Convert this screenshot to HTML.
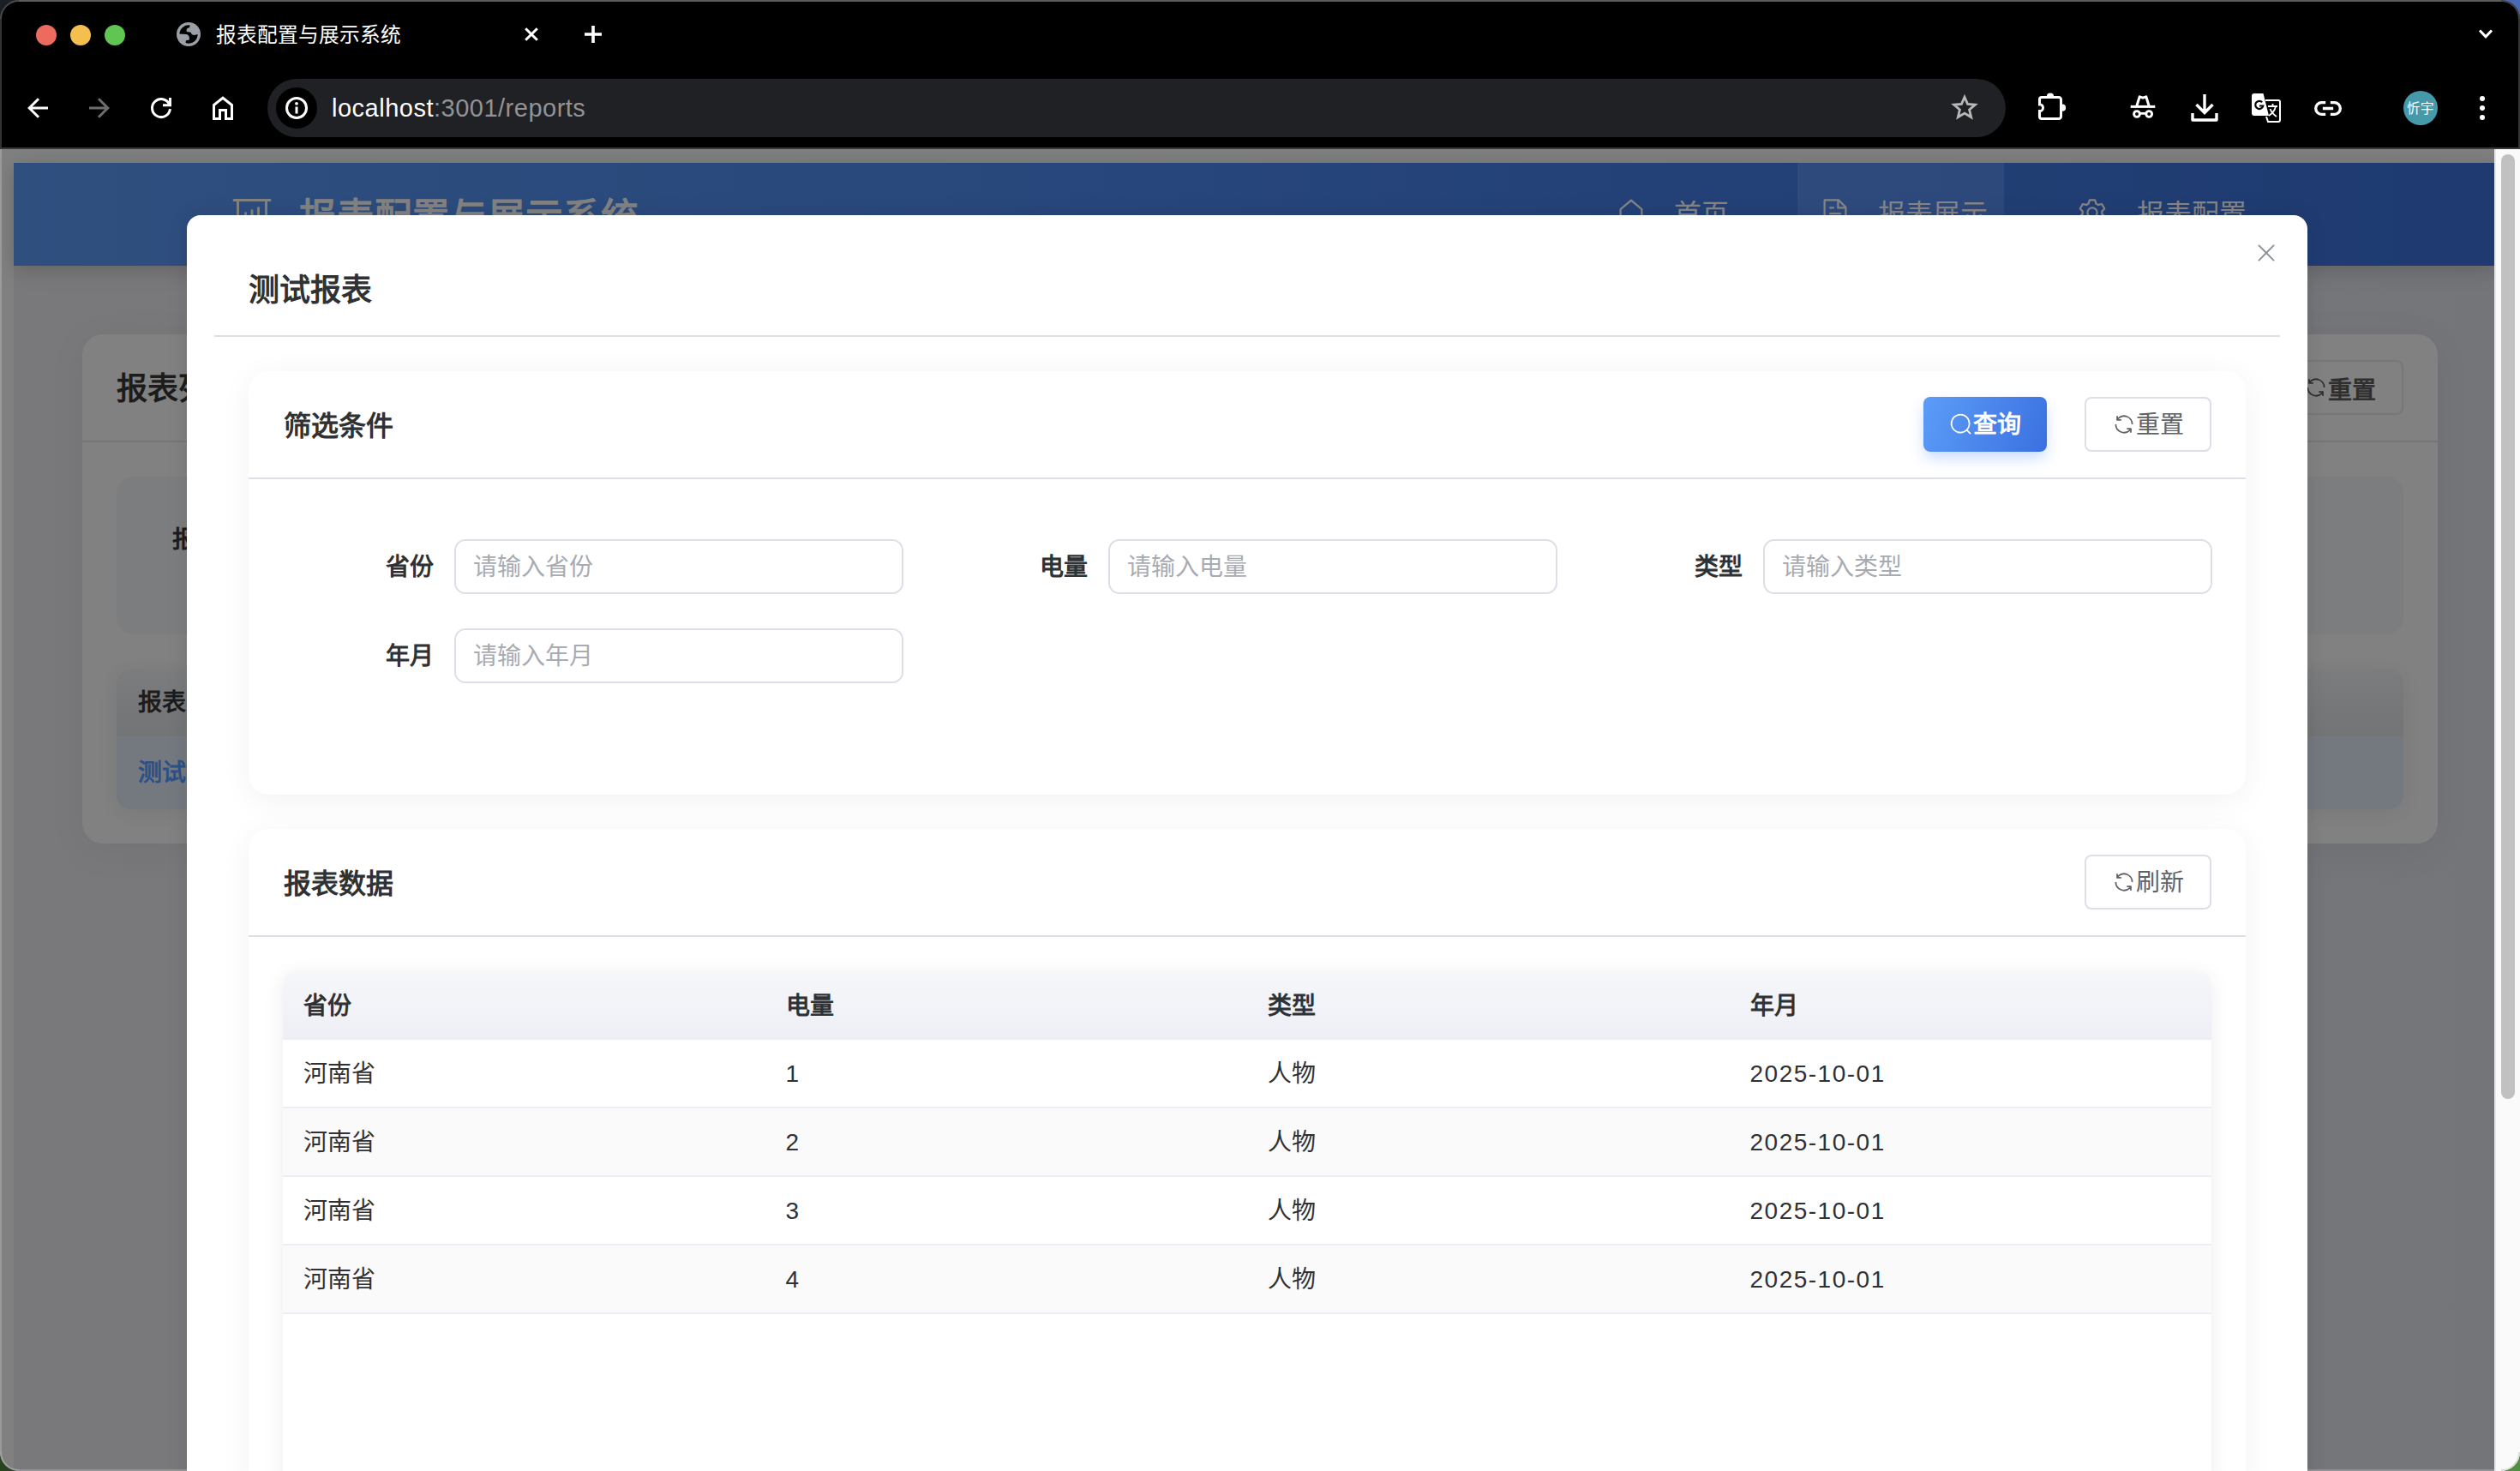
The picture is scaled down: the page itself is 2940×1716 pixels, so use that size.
<!DOCTYPE html>
<html lang="zh-CN">
<head>
<meta charset="utf-8">
<title>报表配置与展示系统</title>
<style>
*{box-sizing:border-box;margin:0;padding:0}
html,body{width:2940px;height:1716px;overflow:hidden;background:#000}
body{position:relative;font-family:"Liberation Sans",sans-serif;color:#303133}
.abs{position:absolute}
svg{display:block;overflow:visible}
/* ---------- browser chrome ---------- */
#chrome{position:absolute;left:0;top:0;width:2940px;height:174px;background:#000;z-index:50}
#chrome .topline{position:absolute;left:0;top:0;width:2940px;height:2px;background:#5c5c5c}
#chrome .botline{position:absolute;left:0;top:172px;width:2940px;height:2px;background:#383838}
#chrome .lb{position:absolute;left:0;top:0;width:2px;height:174px;background:#333}
#chrome .rb{position:absolute;right:0;top:0;width:2px;height:174px;background:#333}
.tl{position:absolute;top:29px;width:24px;height:24px;border-radius:50%}
#tabtitle{position:absolute;left:252px;top:21px;height:40px;line-height:40px;font-size:23.700px;color:#fff;white-space:nowrap}
#omni{position:absolute;left:312px;top:92px;width:2028px;height:68px;border-radius:34px;background:#202124}
#omni .info{position:absolute;left:10px;top:10px;width:48px;height:48px;border-radius:50%;background:#000}
#url{position:absolute;left:75px;top:0;height:68px;line-height:68px;font-size:29px;color:#fff;white-space:nowrap;letter-spacing:.5px}
#url span{color:#929395}
#avatar{position:absolute;left:2804px;top:106px;width:40px;height:40px;border-radius:50%;background:#4699a8;color:#fff;font-size:15.500px;line-height:42px;text-align:center;white-space:nowrap}
/* corners of the window */
.corner{position:absolute;width:22px;height:22px;z-index:60;pointer-events:none}
/* ---------- page ---------- */
#page{position:absolute;left:0;top:174px;width:2910px;height:1542px;background:#808080;overflow:hidden}
#page .lb{position:absolute;left:0;top:0;width:2px;height:1542px;background:#9a9a9a;z-index:5}
#app{position:absolute;left:16px;top:16px;width:2900px;height:1600px;background:linear-gradient(90deg,#79797b 0%,#747579 100%)}
#hdr{position:absolute;left:0;top:0;width:2900px;height:120px;background:linear-gradient(90deg,#2f4f7f 0%,#27467b 45%,#1e3a70 100%);box-shadow:0 4px 24px rgba(0,0,0,.18)}
#hdr .title{position:absolute;left:333px;top:41px;height:44px;line-height:44px;font-size:43.600px;font-weight:700;color:#828282;white-space:nowrap}
.nav{position:absolute;top:0;height:120px}
.nav .t{position:absolute;top:42px;height:36px;line-height:36px;font-size:32px;font-weight:500;color:#858585;white-space:nowrap}
#scroll{position:absolute;left:2910px;top:174px;width:30px;height:1542px;background:#fafafa;border-left:2px solid #e8e8e8}
#scroll .thumb{position:absolute;left:6px;top:6px;width:16px;height:1102px;border-radius:8px;background:#c1c1c1}
/* background card (dimmed) */
#bgcard{position:absolute;left:80px;top:200px;width:2748px;height:594px;border-radius:24px;background:#818181;box-shadow:0 8px 48px rgba(0,0,0,.05)}

/* bg card content */
#bgcard .h{position:absolute;left:40px;top:40px;height:48px;line-height:48px;font-size:36px;font-weight:700;color:#1c1c1c;white-space:nowrap}
#bgcard .hl{position:absolute;left:0;top:124px;width:2748px;height:2px;background:#75767b}
#bgcard .btn{position:absolute;left:2560px;top:30px;width:148px;height:64px;border:2px solid #76777d;border-radius:8px;color:#2f2f30;font-size:28px;font-weight:700;line-height:60px;white-space:nowrap}
#bgcard .btn svg{position:absolute;left:30px;top:16px}
#bgcard .btn span{position:absolute;left:58px;top:1px}
#bgcard .fbox{position:absolute;left:40px;top:166px;width:2668px;height:184px;border-radius:20px;background:#7c7d7f}
#bgcard .fbox .l{position:absolute;left:65px;top:54px;height:40px;line-height:40px;font-size:28px;font-weight:700;color:#1c1c1c}
#bgcard .tbl{position:absolute;left:40px;top:391px;width:2668px;height:163px;border-radius:16px;overflow:hidden;box-shadow:0 4px 24px rgba(0,0,0,.06)}
#bgcard .tbl .th{position:absolute;left:0;top:0;width:100%;height:78px;background:linear-gradient(180deg,#7b7c7e,#737476)}
#bgcard .tbl .tr{position:absolute;left:0;top:78px;width:100%;height:85px;background:#747980}
#bgcard .tbl .a{position:absolute;left:25px;height:40px;line-height:40px;font-size:28px;font-weight:700;white-space:nowrap}
/* ---------- modal ---------- */
#modal{position:absolute;left:218px;top:251px;width:2474px;height:1600px;background:#fff;border-radius:16px;z-index:20;box-shadow:0 0 24px rgba(0,0,0,.10)}
#modal .mtitle{position:absolute;left:72px;top:64px;height:48px;line-height:48px;font-size:36px;font-weight:700;color:#303133;white-space:nowrap}
#modal .mclose{position:absolute;left:2410px;top:28px;color:#909399}
#modal .mline{position:absolute;left:32px;top:140px;width:2410px;height:2px;background:#dcdfe6}
.card{position:absolute;left:72px;width:2330px;background:#fff;border-radius:24px;box-shadow:0 6px 36px rgba(0,0,0,.055)}
.card .ct{position:absolute;left:41px;top:42px;height:44px;line-height:44px;font-size:32px;font-weight:700;color:#303133;white-space:nowrap}
.card .cl{position:absolute;left:0;top:124px;width:2330px;height:2px;background:#dddfe7}
.btn{position:absolute;height:64px;border-radius:8px;font-size:28px;white-space:nowrap}
.btn svg{position:absolute;top:18px}
.btn span{position:absolute;top:0;height:64px;line-height:65px}
.btn.pri{background:linear-gradient(112deg,#5c9df8 0%,#3a70e0 100%);color:#fff;font-weight:700;box-shadow:0 8px 18px -2px rgba(64,128,255,.32)}
.btn.def{background:#fff;border:2px solid #dcdfe6;color:#606266;font-weight:500}
.btn.def svg{top:16px}
.btn.def span{height:60px;line-height:62px}
.fl{position:absolute;width:176px;height:64px;line-height:66px;text-align:right;font-size:28px;font-weight:700;color:#303133;white-space:nowrap}
.fi{position:absolute;width:524px;height:64px;border:2px solid #dcdfe6;border-radius:13px;background:#fff;padding-left:20px;line-height:62px;font-size:28px;color:#a8abb2;white-space:nowrap}
#tbl{position:absolute;left:40px;top:166px;width:2250px;height:700px;border-radius:16px;overflow:hidden;box-shadow:0 4px 24px rgba(0,0,0,.08);background:#fff}
#tbl .th{position:absolute;left:0;top:0;width:2250px;height:80px;background:linear-gradient(180deg,#f5f7fa 0%,#edeff5 100%)}
#tbl .tr{position:absolute;left:0;width:2250px;height:80px;border-bottom:2px solid #ebeef5;background:#fff}
#tbl .tr.s{background:#fafafa}
#tbl .c{position:absolute;top:0;height:78px;line-height:80px;font-size:28px;color:#303133;white-space:nowrap}
#tbl .th .c{font-weight:700;height:80px;line-height:81px}

.corner.tl{left:0;top:0}
.corner.tr{right:0;top:0;transform:scaleX(-1)}
.corner.bl{left:0;bottom:0;transform:scaleY(-1)}
.corner.br{right:0;bottom:0;transform:scale(-1,-1)}
#botline{position:absolute;left:0;top:1714px;width:2910px;height:2px;background:rgba(255,255,255,.2);z-index:55}
</style>
</head>
<body>
<div id="chrome">
  <div class="topline"></div><div class="lb"></div><div class="rb"></div><div class="botline"></div>
  <div class="tl" style="left:42px;background:#ec6a5e"></div>
  <div class="tl" style="left:82px;background:#f4bf4f"></div>
  <div class="tl" style="left:122px;background:#61c554"></div>
  <!-- globe favicon -->
  <svg class="abs" style="left:206px;top:26px" width="28" height="28" viewBox="0 0 28 28">
    <circle cx="14" cy="14" r="14" fill="#9aa0a6"/>
    <path fill="#000" d="M15.800 3.400A10.700 10.700 0 0 0 3.400 13.600L11.500 13.900C13.500 14.200 14.900 16 14.900 18.500L14.800 20.400L10.900 21.200L10.600 24.100A10.700 10.700 0 0 0 24.700 14.100L20.700 14.900C19 14.900 17.800 14.300 17.400 13.600L16.600 11.700L11.700 11.100V8.100L13 6.800L14.900 6.200Z"/>
  </svg>
  <div id="tabtitle">报表配置与展示系统</div>
  <!-- tab close -->
  <svg class="abs" style="left:612px;top:32px" width="16" height="16" viewBox="0 0 16 16"><path d="M1.200 1.200L14.800 14.800M14.800 1.200L1.200 14.800" stroke="#fff" stroke-width="3" fill="none"/></svg>
  <!-- new tab -->
  <svg class="abs" style="left:682px;top:30px" width="20" height="20" viewBox="0 0 20 20"><path d="M10 0V20M0 10H20" stroke="#fff" stroke-width="3.600" fill="none"/></svg>
  <!-- chevron -->
  <svg class="abs" style="left:2892px;top:34px" width="16" height="12" viewBox="0 0 16 12"><path d="M1 1.500L8 8.800L15 1.500" stroke="#fff" stroke-width="3" fill="none"/></svg>
  <!-- back -->
  <svg class="abs" style="left:32px;top:114px" width="24" height="24" viewBox="0 0 24 24"><path d="M24 12H3.500M13 1.200L2.200 12L13 22.800" stroke="#fff" stroke-width="3" fill="none"/></svg>
  <!-- forward -->
  <svg class="abs" style="left:104px;top:114px" width="24" height="24" viewBox="0 0 24 24"><path d="M0 12H20.500M11 1.200L21.800 12L11 22.800" stroke="#6e6e6e" stroke-width="3" fill="none"/></svg>
  <!-- reload -->
  <svg class="abs" style="left:176px;top:114px" width="24" height="24" viewBox="0 0 24 24"><path d="M21.6 7.800A10.500 10.500 0 1 0 22.440 13.100" stroke="#fff" stroke-width="3" fill="none"/><path d="M22.500 0V8.800H14" stroke="#fff" stroke-width="3" fill="none"/></svg>
  <!-- home -->
  <svg class="abs" style="left:248px;top:112px" width="24" height="28" viewBox="0 0 24 28"><path d="M1.500 26.500V10.500L12 2.200L22.500 10.500V26.500H15.500V16.500H8.500V26.500Z" stroke="#fff" stroke-width="3" fill="none"/></svg>
  <div id="omni">
    <div class="info"></div>
    <svg class="abs" style="left:21px;top:21px" width="26" height="26" viewBox="0 0 26 26"><circle cx="13" cy="13" r="11.500" stroke="#fff" stroke-width="3" fill="none"/><rect x="11.500" y="11.500" width="3" height="8" fill="#fff"/><circle cx="13" cy="7.800" r="1.900" fill="#fff"/></svg>
    <div id="url">localhost<span>:3001/reports</span></div>
    <!-- star -->
    <svg class="abs" style="left:1965px;top:18px" width="30" height="30" viewBox="0 0 32 32"><path d="M16 3.500L19.800 12.200L29.200 13L22 19.200L24.200 28.500L16 23.500L7.800 28.500L10 19.200L2.800 13L12.200 12.200Z" stroke="#b8b8b8" stroke-width="3" fill="none" stroke-linejoin="miter"/></svg>
  </div>
  <!-- puzzle -->
  <svg class="abs" style="left:2376px;top:106px" width="36" height="36" viewBox="0 0 36 36"><path d="M3.500 15.700V10a2.500 2.500 0 0 1 2.500-2.500H26a2.500 2.500 0 0 1 2.500 2.500V30a2.500 2.500 0 0 1-2.500 2.500H6a2.500 2.500 0 0 1-2.500-2.500V23.700A4 4 0 0 0 3.500 15.700Z" stroke="#fff" stroke-width="3" fill="none"/><path d="M2 15.700H4M2 23.700H4" stroke="#fff" stroke-width="3"/><path d="M11.900 6.500A4.100 4.100 0 0 1 20.100 6.500V8H11.900Z" fill="#fff"/><path d="M30 15.600A4.100 4.100 0 0 1 30 23.800H28.500V15.600Z" fill="#fff"/></svg>
  <!-- incognito-like extension -->
  <svg class="abs" style="left:2485px;top:110px" width="30" height="30" viewBox="0 0 30 30"><path d="M0.700 14.400H29.300" stroke="#fff" stroke-width="3"/><path d="M7.900 13.500L11.200 2.800L15 4.200L18.800 2.800L22.100 13.500" stroke="#fff" stroke-width="3" fill="none" stroke-linejoin="round"/><circle cx="8" cy="23" r="3.400" stroke="#fff" stroke-width="2.900" fill="none"/><circle cx="22.200" cy="23" r="3.400" stroke="#fff" stroke-width="2.900" fill="none"/><path d="M11.300 22.300H18.900" stroke="#fff" stroke-width="2.800"/></svg>
  <!-- download -->
  <svg class="abs" style="left:2556px;top:110px" width="32" height="32" viewBox="0 0 32 32"><path d="M16 0V21M6.500 12L16 21.500L25.500 12" stroke="#fff" stroke-width="3.400" fill="none"/><path d="M2 22V30H30V22" stroke="#fff" stroke-width="3.400" fill="none" stroke-linejoin="round"/></svg>
  <!-- translate -->
  <svg class="abs" style="left:2627px;top:109px" width="34" height="34" viewBox="0 0 34 34"><path d="M3 0H13.500L20 26H3A3 3 0 0 1 0 23V3A3 3 0 0 1 3 0Z" fill="#fff"/><path d="M16 8H31A2 2 0 0 1 33 10V31A2 2 0 0 1 31 33H19L17 27" stroke="#fff" stroke-width="2" fill="none"/><path d="M19 15H30M24.500 12V15M28 15C27 20 23 24 20 26M21.500 18C23 22 26 25 29 27" stroke="#fff" stroke-width="1.800" fill="none"/><path d="M12.200 10.300A4.600 4.600 0 1 0 13.300 14.500H9" stroke="#000" stroke-width="2.200" fill="none"/></svg>
  <!-- link -->
  <svg class="abs" style="left:2700px;top:117.500px" width="32" height="17" viewBox="0 0 34 18"><path d="M14 1.800H9A7.200 7.200 0 0 0 9 16.200H14M20 1.800H25A7.200 7.200 0 0 1 25 16.200H20M10.500 9H23.500" stroke="#fff" stroke-width="3.500" fill="none"/></svg>
  <div id="avatar">忻宇</div>
  <!-- menu dots -->
  <svg class="abs" style="left:2892px;top:111px" width="8" height="30" viewBox="0 0 8 30"><circle cx="4" cy="4" r="3" fill="#fff"/><circle cx="4" cy="15" r="3" fill="#fff"/><circle cx="4" cy="26" r="3" fill="#fff"/></svg>
</div>

<div id="page">
  <div class="lb"></div>
  <div id="app">
    <div id="hdr">
      <svg class="abs" style="left:254px;top:36px;color:#828282" width="48" height="48" viewBox="0 0 1024 1024"><path fill="currentColor" d="m665.216 768 110.848 192h-73.856L591.360 768H433.024L322.176 960H248.320l110.848-192H160a32 32 0 0 1-32-32V192H64a32 32 0 0 1 0-64h896a32 32 0 1 1 0 64h-64v544a32 32 0 0 1-32 32zM832 192H192v512h640zM352 448a32 32 0 0 1 32 32v64a32 32 0 0 1-64 0v-64a32 32 0 0 1 32-32m160-64a32 32 0 0 1 32 32v128a32 32 0 0 1-64 0V416a32 32 0 0 1 32-32m160-64a32 32 0 0 1 32 32v192a32 32 0 1 1-64 0V352a32 32 0 0 1 32-32"/></svg>
      <div class="title">报表配置与展示系统</div>
      <div class="nav" style="left:1841px;width:240px">
        <svg class="abs" style="left:28px;top:40px;color:#858585" width="36" height="36" viewBox="0 0 1024 1024"><path fill="currentColor" d="M192 413.952V896h640V413.952L512 147.328zM139.520 374.400l352-293.312a32 32 0 0 1 40.960 0l352 293.312A32 32 0 0 1 896 398.976V928a32 32 0 0 1-32 32H160a32 32 0 0 1-32-32V398.976a32 32 0 0 1 11.520-24.576"/></svg>
        <div class="t" style="left:96px">首页</div>
      </div>
      <div class="nav" style="left:2081px;width:241px;background:rgba(255,255,255,.055)">
        <svg class="abs" style="left:26px;top:40px;color:#858585" width="36" height="36" viewBox="0 0 1024 1024"><path fill="currentColor" d="M832 384H576V128H192v768h640zm-26.496-64L640 154.496V320zM160 64h480l256 256v608a32 32 0 0 1-32 32H160a32 32 0 0 1-32-32V96a32 32 0 0 1 32-32m160 448h384v64H320zm0-192h160v64H320zm0 384h384v64H320z"/></svg>
        <div class="t" style="left:94px">报表展示</div>
      </div>
      <div class="nav" style="left:2322px;width:330px">
        <svg class="abs" style="left:85px;top:40px;color:#858585" width="36" height="36" viewBox="0 0 1024 1024"><path fill="currentColor" d="M600.704 64a32 32 0 0 1 30.464 22.208l35.200 109.376c14.784 7.232 28.928 15.360 42.432 24.512l112.384-24.192a32 32 0 0 1 34.432 15.360L944.320 364.800a32 32 0 0 1-4.032 37.504l-77.120 85.120a357.120 357.120 0 0 1 0 49.024l77.120 85.248a32 32 0 0 1 4.032 37.504l-88.704 153.600a32 32 0 0 1-34.432 15.296L708.800 803.904c-13.440 9.088-27.648 17.280-42.368 24.512l-35.264 109.376A32 32 0 0 1 600.704 960H423.296a32 32 0 0 1-30.464-22.208L357.696 828.480a351.616 351.616 0 0 1-42.560-24.640l-112.320 24.256a32 32 0 0 1-34.432-15.360L79.680 659.200a32 32 0 0 1 4.032-37.504l77.120-85.248a357.120 357.120 0 0 1 0-48.896l-77.120-85.248A32 32 0 0 1 79.680 364.800l88.704-153.600a32 32 0 0 1 34.432-15.296l112.320 24.256c13.568-9.152 27.776-17.408 42.560-24.640l35.200-109.312A32 32 0 0 1 423.232 64H600.640zm-23.424 64H446.720l-36.352 113.088-24.512 11.968a294.113 294.113 0 0 0-34.816 20.096l-22.656 15.360-116.224-25.088-65.280 113.152 79.680 88.192-1.920 27.136a293.120 293.120 0 0 0 0 40.192l1.920 27.136-79.808 88.192 65.344 113.152 116.224-25.024 22.656 15.296a294.113 294.113 0 0 0 34.816 20.096l24.512 11.968L446.720 896h130.688l36.480-113.152 24.448-11.904a288.282 288.282 0 0 0 34.752-20.096l22.592-15.296 116.288 25.024 65.280-113.152-79.744-88.192 1.920-27.136a293.120 293.120 0 0 0 0-40.256l-1.920-27.136 79.808-88.128-65.344-113.152-116.288 24.960-22.592-15.232a287.616 287.616 0 0 0-34.752-20.096l-24.448-11.904L577.344 128zM512 320a192 192 0 1 1 0 384 192 192 0 0 1 0-384m0 64a128 128 0 1 0 0 256 128 128 0 0 0 0-256"/></svg>
        <div class="t" style="left:155px">报表配置</div>
      </div>
    </div>
    <div id="bgcard">
      <div class="h">报表列表</div>
      <div class="btn"><svg width="28" height="28" viewBox="0 0 1024 1024"><path fill="currentColor" d="M771.776 794.88A384 384 0 0 1 128 512h64a320 320 0 0 0 555.712 216.448H654.72a32 32 0 1 1 0-64h149.056a32 32 0 0 1 32 32v148.928a32 32 0 1 1-64 0v-50.56zM276.288 295.616h92.992a32 32 0 0 1 0 64H220.16a32 32 0 0 1-32-32V178.56a32 32 0 0 1 64 0v50.56A384 384 0 0 1 896.128 512h-64a320 320 0 0 0-555.776-216.384z"/></svg><span>重置</span></div>
      <div class="hl"></div>
      <div class="fbox"><div class="l">报表名称</div></div>
      <div class="tbl"><div class="th"><div class="a" style="top:19px;color:#1c1c1c">报表名称</div></div><div class="tr"><div class="a" style="top:23px;color:#2d5187">测试报表</div></div></div>
    </div>
  </div>
</div>
<div id="scroll"><div class="thumb"></div></div>
<div id="modal">
  <div class="mtitle">测试报表</div>
  <svg class="mclose" width="32" height="32" viewBox="0 0 1024 1024"><path fill="currentColor" d="M764.288 214.592 512 466.88 259.712 214.592a31.936 31.936 0 0 0-45.12 45.12L466.752 512 214.528 764.224a31.936 31.936 0 1 0 45.12 45.184L512 557.184l252.288 252.288a31.936 31.936 0 0 0 45.12-45.12L557.12 512.064l252.288-252.352a31.936 31.936 0 1 0-45.12-45.184z"/></svg>
  <div class="mline"></div>
  <div class="card" style="top:182px;height:494px">
    <div class="ct">筛选条件</div>
    <div class="btn pri" style="left:1954px;top:30px;width:144px"><svg style="left:30px" width="28" height="28" viewBox="0 0 1024 1024"><path fill="currentColor" d="m795.904 750.72 124.992 124.928a32 32 0 0 1-45.248 45.248L750.656 795.904a416 416 0 1 1 45.248-45.248zM480 832a352 352 0 1 0 0-704 352 352 0 0 0 0 704"/></svg><span style="left:58px">查询</span></div>
    <div class="btn def" style="left:2142px;top:30px;width:148px"><svg style="left:30px" width="28" height="28" viewBox="0 0 1024 1024"><path fill="currentColor" d="M771.776 794.88A384 384 0 0 1 128 512h64a320 320 0 0 0 555.712 216.448H654.72a32 32 0 1 1 0-64h149.056a32 32 0 0 1 32 32v148.928a32 32 0 1 1-64 0v-50.56zM276.288 295.616h92.992a32 32 0 0 1 0 64H220.16a32 32 0 0 1-32-32V178.56a32 32 0 0 1 64 0v50.56A384 384 0 0 1 896.128 512h-64a320 320 0 0 0-555.776-216.384z"/></svg><span style="left:58px">重置</span></div>
    <div class="cl"></div>
    <div class="fl" style="left:40px;top:196px">省份</div><div class="fi" style="left:240px;top:196px">请输入省份</div>
    <div class="fl" style="left:803px;top:196px">电量</div><div class="fi" style="left:1003px;top:196px">请输入电量</div>
    <div class="fl" style="left:1567px;top:196px">类型</div><div class="fi" style="left:1767px;top:196px">请输入类型</div>
    <div class="fl" style="left:40px;top:300px">年月</div><div class="fi" style="left:240px;top:300px">请输入年月</div>
  </div>
  <div class="card" style="top:716px;height:900px">
    <div class="ct">报表数据</div>
    <div class="btn def" style="left:2142px;top:30px;width:148px"><svg style="left:30px" width="28" height="28" viewBox="0 0 1024 1024"><path fill="currentColor" d="M771.776 794.88A384 384 0 0 1 128 512h64a320 320 0 0 0 555.712 216.448H654.72a32 32 0 1 1 0-64h149.056a32 32 0 0 1 32 32v148.928a32 32 0 1 1-64 0v-50.56zM276.288 295.616h92.992a32 32 0 0 1 0 64H220.16a32 32 0 0 1-32-32V178.56a32 32 0 0 1 64 0v50.56A384 384 0 0 1 896.128 512h-64a320 320 0 0 0-555.776-216.384z"/></svg><span style="left:58px">刷新</span></div>
    <div class="cl"></div>
    <div id="tbl"><div class="th"><div class="c" style="left:24px">省份</div><div class="c" style="left:586.5px">电量</div><div class="c" style="left:1149px">类型</div><div class="c" style="left:1711.5px">年月</div></div><div class="tr" style="top:80px"><div class="c" style="left:24px">河南省</div><div class="c" style="left:586.5px">1</div><div class="c" style="left:1149px">人物</div><div class="c" style="left:1711.5px;letter-spacing:1.5px">2025-10-01</div></div><div class="tr s" style="top:160px"><div class="c" style="left:24px">河南省</div><div class="c" style="left:586.5px">2</div><div class="c" style="left:1149px">人物</div><div class="c" style="left:1711.5px;letter-spacing:1.5px">2025-10-01</div></div><div class="tr" style="top:240px"><div class="c" style="left:24px">河南省</div><div class="c" style="left:586.5px">3</div><div class="c" style="left:1149px">人物</div><div class="c" style="left:1711.5px;letter-spacing:1.5px">2025-10-01</div></div><div class="tr s" style="top:320px"><div class="c" style="left:24px">河南省</div><div class="c" style="left:586.5px">4</div><div class="c" style="left:1149px">人物</div><div class="c" style="left:1711.5px;letter-spacing:1.5px">2025-10-01</div></div></div>
  </div>
</div>
<div id="botline"></div><div class="corner tl"><svg width="22" height="22" viewBox="0 0 22 22"><path d="M0 0H22A22 22 0 0 0 0 22Z" fill="#1b1e27"/><path d="M1 22A21 21 0 0 1 22 1" stroke="#484848" stroke-width="2" fill="none"/></svg></div><div class="corner tr"><svg width="22" height="22" viewBox="0 0 22 22"><path d="M0 0H22A22 22 0 0 0 0 22Z" fill="#4a6ab8"/><path d="M1 22A21 21 0 0 1 22 1" stroke="#444" stroke-width="2" fill="none"/></svg></div><div class="corner bl"><svg width="22" height="22" viewBox="0 0 22 22"><path d="M0 0H22A22 22 0 0 0 0 22Z" fill="#27431f"/><path d="M1 22A21 21 0 0 1 22 1" stroke="#a0a0a0" stroke-width="2" fill="none"/></svg></div><div class="corner br"><svg width="22" height="22" viewBox="0 0 22 22"><path d="M0 0H22A22 22 0 0 0 0 22Z" fill="#4f8f3f"/><path d="M1 22A21 21 0 0 1 22 1" stroke="#ddd" stroke-width="2" fill="none"/></svg></div>
</body>
</html>
